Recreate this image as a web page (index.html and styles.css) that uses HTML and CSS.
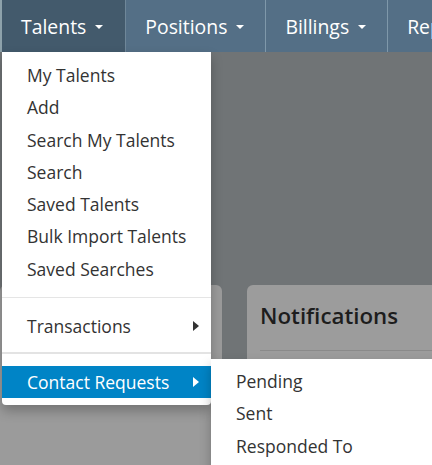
FILE: index.html
```html
<!DOCTYPE html>
<html>
<head>
<meta charset="utf-8">
<link rel="stylesheet" href="styles.css">
</head>
<body>
<nav class="topbar">
  <div class="edge"></div>
  <a class="nav-item active">Talents <span class="caret"></span></a>
  <a class="nav-item">Positions <span class="caret"></span></a>
  <a class="nav-item">Billings <span class="caret"></span></a>
  <a class="nav-item">Reports <span class="caret"></span></a>
</nav>
<main class="content">
  <section class="card left-card"></section>
  <section class="card right-card">
    <h2 class="card-title">Notifications</h2>
    <div class="card-rule"></div>
  </section>
</main>
<ul class="dropdown">
  <li class="item">My Talents</li>
  <li class="item">Add</li>
  <li class="item">Search My Talents</li>
  <li class="item">Search</li>
  <li class="item">Saved Talents</li>
  <li class="item">Bulk Import Talents</li>
  <li class="item">Saved Searches</li>
  <li class="divider"></li>
  <li class="item sub">Transactions <span class="tri"></span></li>
  <li class="divider thick"></li>
  <li class="item sub selected">Contact Requests <span class="tri"></span></li>
</ul>
<ul class="submenu">
  <li class="item">Pending</li>
  <li class="item">Sent</li>
  <li class="item">Responded To</li>
</ul>
</body>
</html>
```
FILE: styles.css
```css
* { box-sizing: border-box; }
html, body {
  margin: 0;
  padding: 0;
  width: 432px;
  height: 465px;
  overflow: hidden;
}
body {
  background: #707476;
  font-family: "Open Sans", "Liberation Sans", sans-serif;
  position: relative;
}
.topbar {
  display: flex;
  height: 52px;
  background: #546f86;
  white-space: nowrap;
  overflow: hidden;
}
.edge {
  width: 2px;
  flex: none;
  background: #8ea2ab;
}
.nav-item {
  display: flex;
  align-items: center;
  gap: 9px;
  padding: 0 21px 0 19px;
  color: #fff;
  font-size: 19.4px;
  border-right: 1px solid #7f98aa;
  flex: none;
}
.nav-item.active {
  background: #435a6c;
  border-right-color: #6f8799;
  padding-right: 22px;
}
.caret {
  display: inline-block;
  width: 0;
  height: 0;
  border-top: 4px solid #fff;
  border-left: 4px solid transparent;
  border-right: 4px solid transparent;
  margin-top: 2px;
}
.content {
  display: flex;
  gap: 25px;
  padding-top: 233px;
}
.card {
  background: #9b9b9b;
  border-radius: 6px 6px 0 0;
  height: 200px;
  flex: none;
}
.left-card {
  width: 222px;
}
.right-card {
  width: 220px;
  padding: 14px 0 0 13px;
  background: #9c9c9c;
}
.card-title {
  margin: 0;
  font-size: 22.3px;
  font-weight: 600;
  color: #1d1d1d;
  line-height: 34px;
}
.card-rule {
  margin-top: 17px;
  height: 1px;
  background: #8a8a8a;
}
.dropdown, .submenu {
  list-style: none;
  margin: 0;
  background: #fff;
  position: absolute;
  box-shadow: 0 6px 12px rgba(0,0,0,0.25);
}
.dropdown {
  top: 52px;
  left: 2px;
  width: 209px;
  padding: 7px 0 7px 0;
  border-radius: 0 0 4px 4px;
}
.submenu {
  top: 359px;
  left: 211px;
  width: 240px;
  padding: 6px 0 20px 0;
  border-radius: 0 4px 0 0;
}
.item {
  height: 32.3px;
  line-height: 32.3px;
  padding: 0 12px 0 25px;
  font-size: 17.5px;
  color: #333;
  white-space: nowrap;
  display: flex;
  align-items: center;
  justify-content: space-between;
}
.divider {
  height: 1px;
  margin: 12px 0 12px 0;
  background: #e5e5e5;
}
.divider.thick {
  height: 2px;
  margin: 10px 0 11.7px 0;
  background: #e3e3e3;
}
.item.selected {
  background: #0084c6;
  color: #fff;
}
.tri {
  width: 0;
  height: 0;
  border-left: 6px solid #333;
  border-top: 5px solid transparent;
  border-bottom: 5px solid transparent;
}
.selected .tri {
  border-left-color: #fff;
}
```
